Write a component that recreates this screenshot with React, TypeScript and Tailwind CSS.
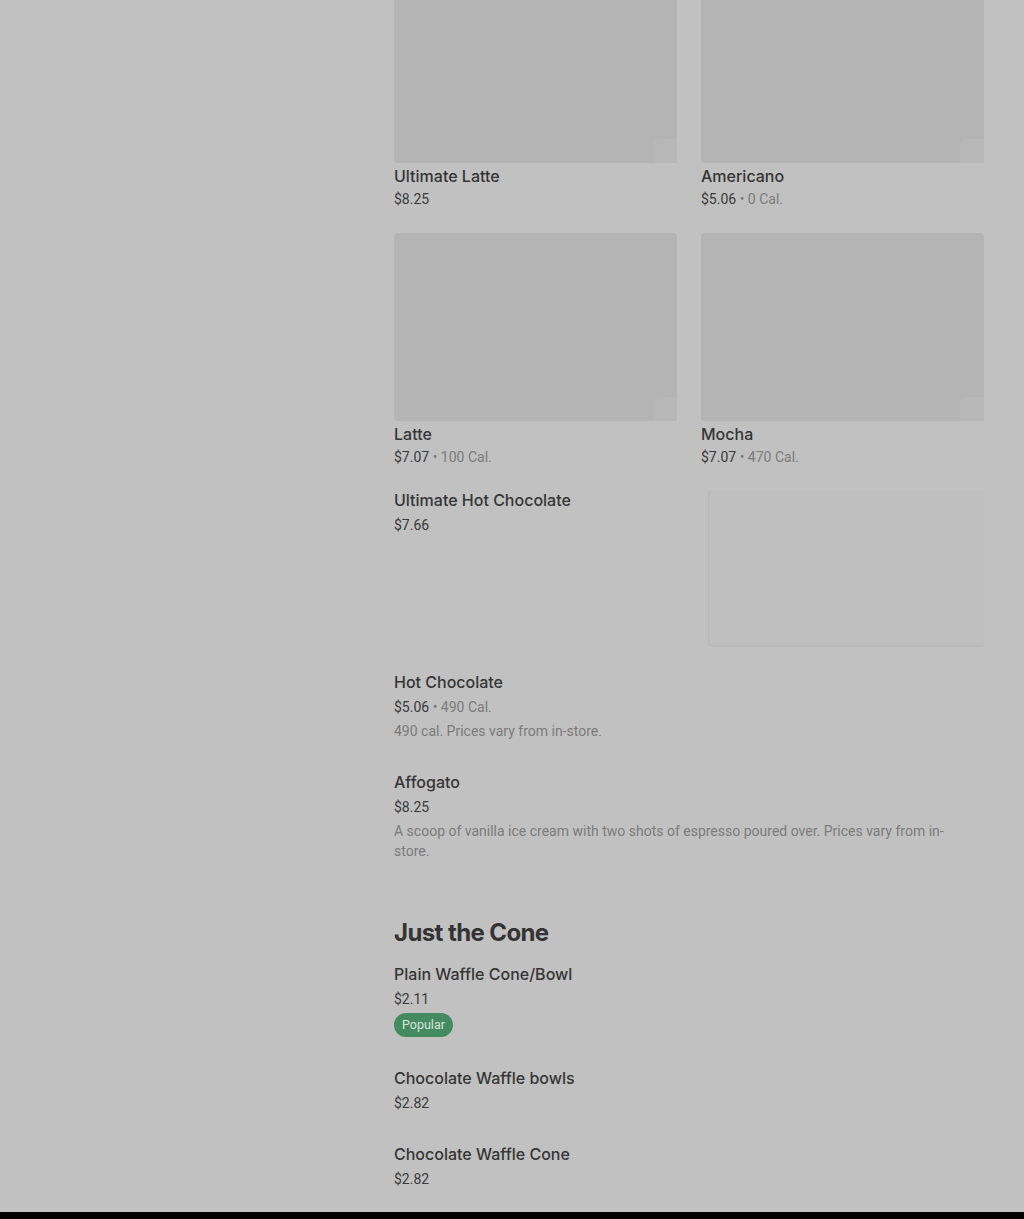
import React from 'react'

type Card = { name: string; price: string; cal?: string }
type Item = { name: string; price: string; cal?: string; desc?: string; popular?: boolean; image?: boolean }

const cards: Card[] = [
  { name: 'Ultimate Latte', price: '$8.25' },
  { name: 'Americano', price: '$5.06', cal: '0 Cal.' },
  { name: 'Latte', price: '$7.07', cal: '100 Cal.' },
  { name: 'Mocha', price: '$7.07', cal: '470 Cal.' },
]

const coffeeList: Item[] = [
  { name: 'Ultimate Hot Chocolate', price: '$7.66', image: true },
  { name: 'Hot Chocolate', price: '$5.06', cal: '490 Cal.', desc: '490 cal. Prices vary from in-store.' },
  {
    name: 'Affogato',
    price: '$8.25',
    desc: 'A scoop of vanilla ice cream with two shots of espresso poured over. Prices vary from in-store.',
  },
]

const coneList: Item[] = [
  { name: 'Plain Waffle Cone/Bowl', price: '$2.11', popular: true },
  { name: 'Chocolate Waffle bowls', price: '$2.82' },
  { name: 'Chocolate Waffle Cone', price: '$2.82' },
]

const title = "font-['Inter',sans-serif] text-[16px] leading-[24px] font-medium text-[#353535]"
const small = "font-['Roboto',sans-serif] text-[14px] leading-[20px]"

function PriceLine({ price, cal }: { price: string; cal?: string }) {
  return (
    <div className={`${small} text-[#3a3a3a]`}>
      {price}
      {cal && <span className="text-[#7b7b7b]"> • {cal}</span>}
    </div>
  )
}

function MenuCard({ card }: { card: Card }) {
  return (
    <div>
      <div className="relative h-[188px] rounded bg-[#b4b4b4]">
        <div className="absolute right-0 bottom-0 h-6 w-6 rounded-tl-md bg-[#b7b7b7]" />
      </div>
      <div className={`${title} mt-[1px]`}>{card.name}</div>
      <div className="mt-[1px]">
        <PriceLine price={card.price} cal={card.cal} />
      </div>
    </div>
  )
}

function ListItem({ item }: { item: Item }) {
  return (
    <div className={`flex justify-between pt-[15px] ${item.image ? 'pb-[8px]' : 'pb-[14px]'}`}>
      <div className="flex flex-col">
        <div className={title}>{item.name}</div>
        <div className="mt-[3px]">
          <PriceLine price={item.price} cal={item.cal} />
        </div>
        {item.desc && (
          <p className={`${small} mt-1 pr-6 text-[#7b7b7b]`}>{item.desc}</p>
        )}
        {item.popular && (
          <div className="mt-[4px] flex">
            <span className="flex h-6 items-center rounded-full bg-[#458b62] px-2 font-['Roboto',sans-serif] text-[12.5px] text-[#d5e6da]">
              Popular
            </span>
          </div>
        )}
      </div>
      {item.image && (
        <div className="mt-[2px] h-[157px] w-[276px] shrink-0 rounded border-b-2 border-l-2 border-[#bbbbbb] bg-[#bfbfbf]" />
      )}
    </div>
  )
}

export default function App() {
  return (
    <div className="flex h-[1219px] flex-col overflow-hidden bg-[#c1c1c1]">
      <div className="flex flex-1">
        <aside className="w-[394px] shrink-0" />
        <main className="-mt-[25px] w-[590px]">
          <div className="grid grid-cols-2 gap-x-6 gap-y-6">
            {cards.map((c) => (
              <MenuCard key={c.name} card={c} />
            ))}
          </div>
          <div className="mt-[6px]">
            {coffeeList.map((i) => (
              <ListItem key={i.name} item={i} />
            ))}
          </div>
          <h2 className="mt-[42px] font-['Inter',sans-serif] text-[24px] leading-[32px] font-bold tracking-[-0.6px] text-[#333333]">
            Just the Cone
          </h2>
          <div className="-mt-[2px]">
            {coneList.map((i) => (
              <ListItem key={i.name} item={i} />
            ))}
          </div>
        </main>
      </div>
      <footer className="h-[7px] shrink-0 bg-black" />
    </div>
  )
}
